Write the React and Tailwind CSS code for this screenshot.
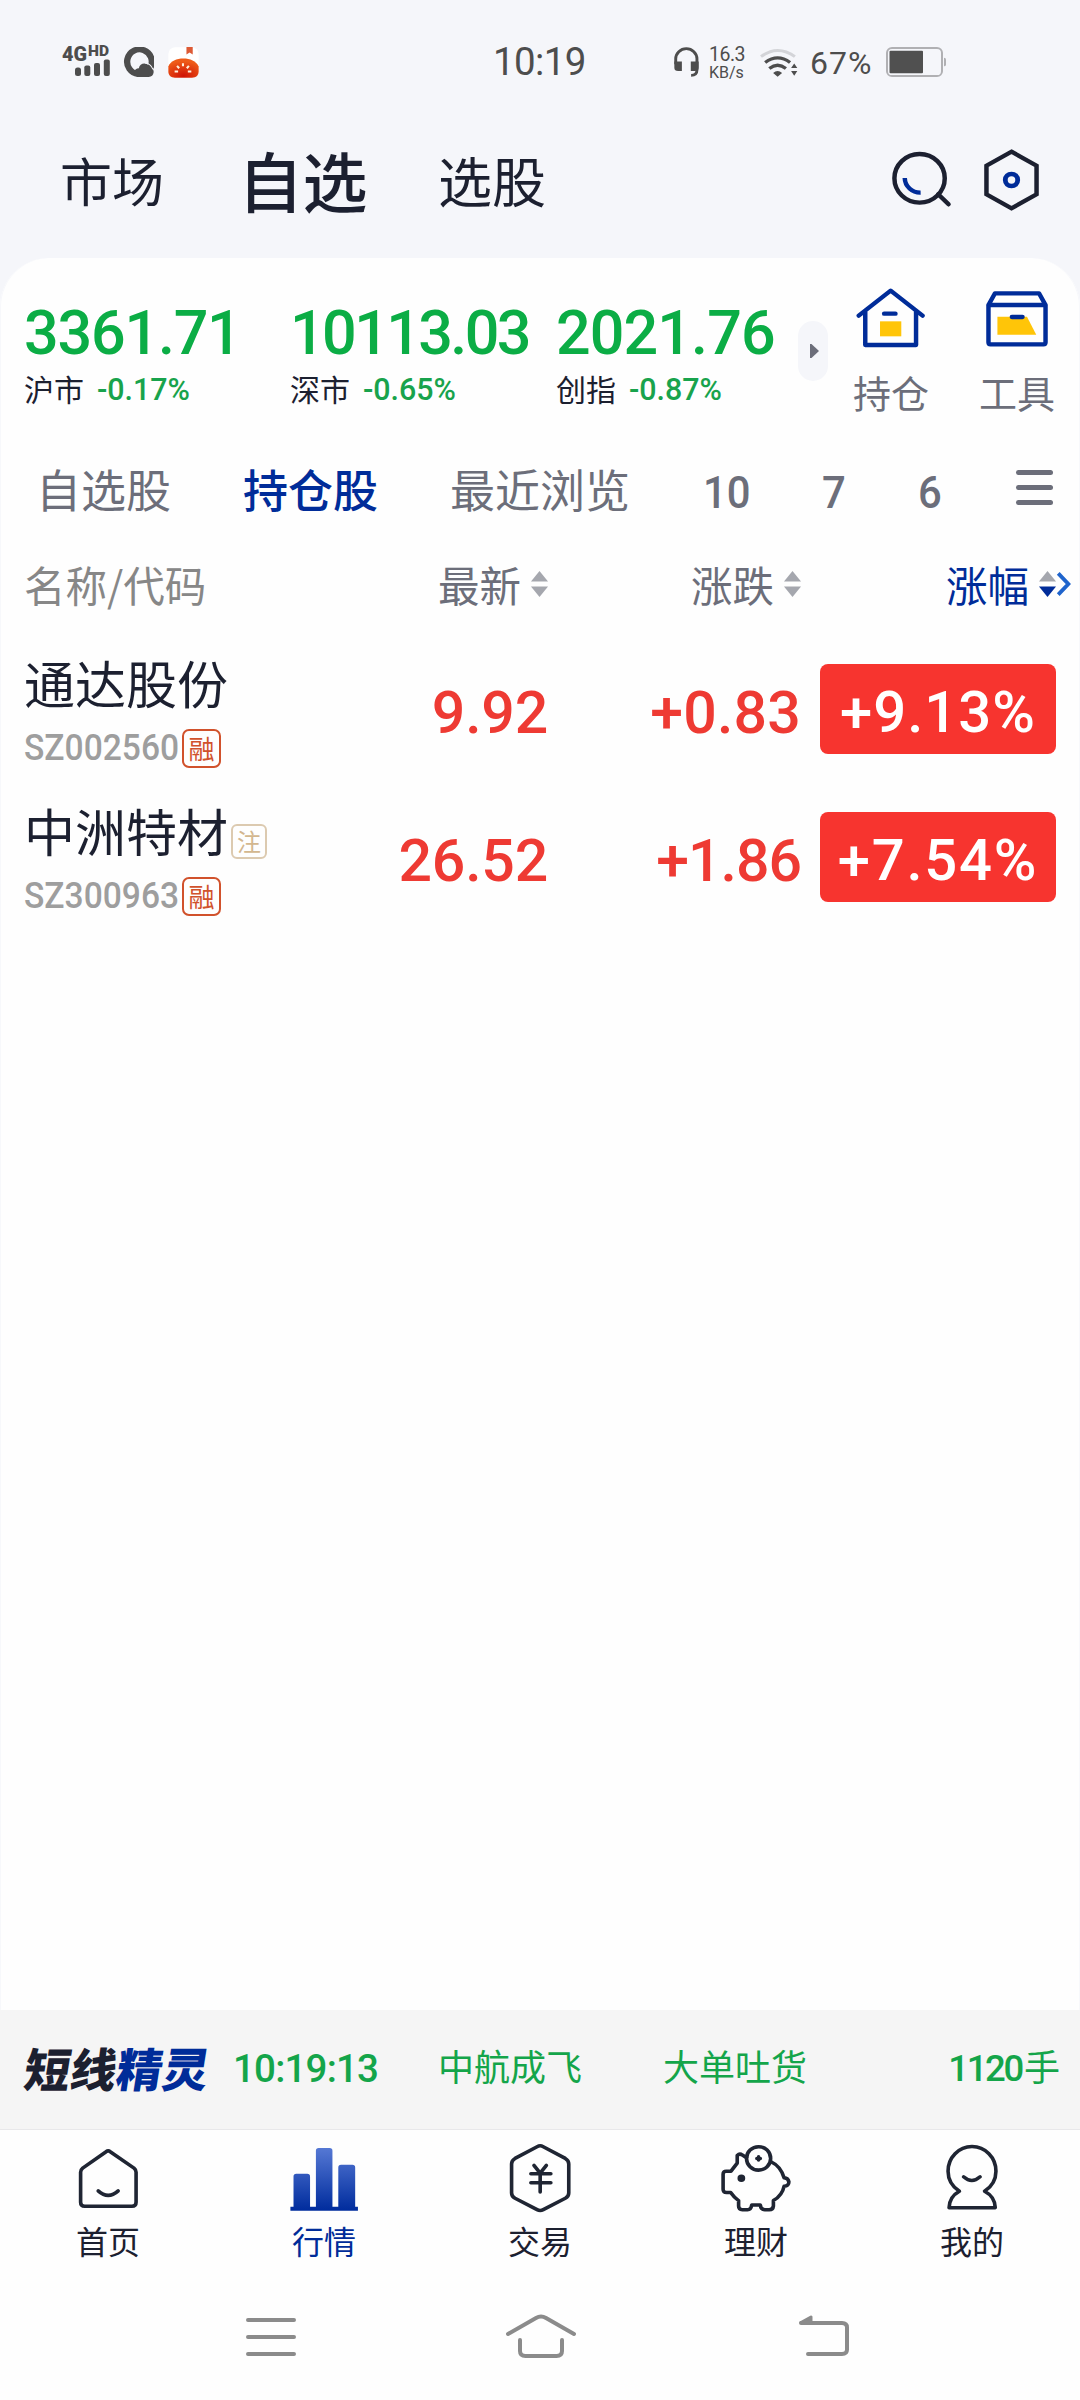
import React from "react";

const CJK = "font-['Noto_Sans_CJK_SC',sans-serif] leading-none whitespace-nowrap";
const NUM = "font-['Roboto','Noto_Sans_CJK_SC',sans-serif] leading-none whitespace-nowrap";

function StatusBar() {
  return (
    <div className="flex h-[116px] shrink-0 items-start text-[#4d4d4d]">
      <svg className="mt-[35px] ml-[60px] h-[46px] w-[55px] overflow-visible" viewBox="-2 -10 55 46" fill="#4d4d4d">
        <text x="0" y="15.5" fontFamily="Roboto, sans-serif" fontWeight="900" fontSize="21" textLength="25" lengthAdjust="spacingAndGlyphs">4G</text>
        <text x="26" y="10.5" fontFamily="Roboto, sans-serif" fontWeight="900" fontSize="14.5" textLength="21" lengthAdjust="spacingAndGlyphs">HD</text>
        <rect x="13" y="22.500" width="6" height="8.500" rx="2.500" />
        <rect x="22.300" y="20.500" width="6" height="10.500" rx="2" />
        <rect x="32" y="18" width="6" height="13" rx="2" />
        <rect x="41.800" y="14.500" width="6" height="16.500" rx="2" />
      </svg>
      <svg className="mt-[47px] ml-[8px] h-[30px] w-[31px]" viewBox="357 81 88 90" preserveAspectRatio="none">
        <path d="M412 162 H400 A35 37 0 1 1 435 142" fill="none" stroke="#4d4d4d" strokeWidth="18" />
        <path d="M398 171 C384 162 388 146 402 145 C404 130 421 126 431 137 C438 141 445 148 444 157 C443 166 438 171 430 171 Z" fill="#4d4d4d" />
        <path d="M420 129 C431 130 438 137 442 148" fill="none" stroke="#f5f6fa" strokeWidth="3" />
      </svg>
      <svg className="mt-[47px] ml-[14px] h-[31px] w-[31px]" viewBox="487 80 89 92" preserveAspectRatio="none">
        <defs>
          <radialGradient id="melon" cx="50%" cy="90%" r="75%">
            <stop offset="0" stopColor="#cf1205" />
            <stop offset="1" stopColor="#ee5b18" />
          </radialGradient>
        </defs>
        <rect x="488" y="81" width="87" height="90" rx="20" fill="#fff" />
        <path d="M488 138 C494 121 512 114 531 114 C550 114 568 121 575 138 V152 C575 164 568 171 556 171 H507 C495 171 488 164 488 152 Z" fill="url(#melon)" />
        <path d="M540 80 H558 V102 L549 96 L540 102 Z" fill="#dd5a35" />
        <path d="M530 128 V137 M513 136 L519 143 M547 136 L541 143 M506 153 H516 M554 153 H544" stroke="#fff0dc" strokeWidth="6" />
      </svg>
      <span className={`${NUM} mt-[43px] ml-[294px] w-[96px] text-[38.500px] tracking-[-0.6px]`}>10:19</span>
      <svg className="mt-[47px] ml-[85px] h-[30px] w-[25px]" viewBox="388 80 73 91" preserveAspectRatio="none">
        <path d="M393 132 V116 A31 31 0 0 1 455 116 V150 Q455 166 438 166" fill="none" stroke="#4d4d4d" strokeWidth="8.5" />
        <path d="M389 124 H411 V153 H400 Q389 153 389 143 Z M437 124 H460 V143 Q460 153 449 153 H437 Z" fill="#4d4d4d" />
      </svg>
      <div className="mt-[45px] ml-[10px] flex w-[51px] flex-col">
        <span className={`${NUM} text-[19.500px] leading-[19px] tracking-[-0.5px]`}>16.3</span>
        <span className={`${NUM} text-[16px] leading-[15px]`}>KB/s</span>
      </div>
      <svg className="mt-[48px] h-[29px] w-[38px]" viewBox="640 84 110 88" preserveAspectRatio="none">
        <path d="M643 110 Q691 73 741 110" fill="none" stroke="#d3d4d8" strokeWidth="9" />
        <path d="M655 128 Q691 100 727 128" fill="none" stroke="#4d4d4d" strokeWidth="10" />
        <path d="M667 146 Q691 127 715 146" fill="none" stroke="#4d4d4d" strokeWidth="10" />
        <path d="M678 160 Q691 148 704 160 L691 171 Z M730 145 L739 131 L748 145 Z M730 154 L739 168 L748 154 Z" fill="#4d4d4d" />
      </svg>
      <span className={`${NUM} mt-[47px] ml-[12px] w-[76px] text-[32px] tracking-[1px]`}>67%</span>
      <svg className="mt-[47px] h-[30px] w-[61px]" viewBox="0 0 61 31" preserveAspectRatio="none">
        <rect x="1" y="1" width="55" height="29" rx="5" fill="none" stroke="#b0b0b3" strokeWidth="2" />
        <rect x="3.500" y="4" width="33.500" height="23" rx="1" fill="#505050" />
        <path d="M58 11 Q60 11 60 13 V18 Q60 20 58 20 Z" fill="#b0b0b3" />
      </svg>
    </div>
  );
}

function TopNav() {
  return (
    <div className="flex h-[142px] shrink-0 items-center pb-[15px] text-[#1c2030]">
      <span className={`${CJK} ml-[60px] w-[178px] text-[52px]`}>市场</span>
      <span className={`${CJK} w-[200px] text-[65px] font-medium tracking-[-0.5px]`}>自选</span>
      <span className={`${CJK} w-[454px] text-[54px]`}>选股</span>
      <svg className="mt-[1px] h-[58px] w-[60px]" viewBox="1020 395 174 174" fill="none" preserveAspectRatio="none">
        <circle cx="1100" cy="477" r="73" stroke="#1c2030" strokeWidth="13" />
        <path d="M1154 525 L1184 555" stroke="#1c2030" strokeWidth="13" strokeLinecap="round" />
        <path d="M1057 476 A45 45 0 0 0 1103 520" stroke="#002c99" strokeWidth="13" />
      </svg>
      <svg className="mt-[1px] ml-[31px] h-[64px] w-[57px]" viewBox="1285 384 165 192" fill="none" preserveAspectRatio="none">
        <path d="M1367.500 395 L1440 437 V523 L1367.500 565 L1295 523 V437 Z" stroke="#1c2030" strokeWidth="13" />
        <circle cx="1367.500" cy="480" r="18" stroke="#002c99" strokeWidth="14" />
      </svg>
    </div>
  );
}

const indices = [
  { value: "3361.71", name: "沪市", pct: "-0.17%", style: "tracking-[-1.2px]" },
  { value: "10113.03", name: "深市", pct: "-0.65%", style: "tracking-[-2.6px]" },
  { value: "2021.76", name: "创指", pct: "-0.87%", style: "tracking-[-0.9px]" },
];

function IndexStrip() {
  return (
    <div className="flex h-[190px] shrink-0 items-start">
      <div className="ml-[24px] grid grid-cols-[266px_266px_242px]">
        {indices.map((i) => (
          <div key={i.name} className="flex flex-col pt-[45px]">
            <span className={`${NUM} text-[61px] font-medium leading-[64px] text-[#0bad45] ${i.style}`}>{i.value}</span>
            <div className="mt-[7px] flex h-[34px] items-center">
              <span className={`${CJK} w-[73px] text-[30px] text-[#1c2030]`}>{i.name}</span>
              <span className={`${NUM} origin-left scale-x-[0.98] pt-[3px] text-[31px] font-medium text-[#18a34c]`}>{i.pct}</span>
            </div>
          </div>
        ))}
      </div>
      <div className="mt-[63px] flex h-[60px] w-[30px] items-center justify-center rounded-full bg-[#f5f6fa]">
        <svg className="ml-[2px] h-[14px] w-[9px]" viewBox="0 0 9 15" preserveAspectRatio="none"><path d="M0 0 H1.500 L9 7.500 L1.500 15 H0 Z" fill="#6c6e7a" /></svg>
      </div>
      <div className="flex w-[126px] flex-col items-center pt-[29px]">
        <svg className="h-[62px] w-[70px]" viewBox="918 110 204 186" fill="none" preserveAspectRatio="none">
          <path d="M926 196 L1019 121 L1112 196 M945 184 V284 H1093 V184" stroke="#002c99" strokeWidth="13" strokeLinecap="round" strokeLinejoin="round" />
          <rect x="988" y="213" width="62" height="45" fill="#ffc508" />
          <path d="M1000 190 H1033" stroke="#002c99" strokeWidth="13" strokeLinecap="round" />
        </svg>
        <span className={`${CJK} mt-[24px] text-[38px] text-[#6c6e7a]`}>持仓</span>
      </div>
      <div className="flex w-[126px] flex-col items-center pt-[29px]">
        <svg className="h-[62px] w-[66px]" viewBox="1289 110 192 186" fill="none" preserveAspectRatio="none">
          <path d="M1302 164 L1321 129 H1449 L1468 164 M1302 164 V276 Q1302 282 1308 282 H1462 Q1468 282 1468 276 V164 Z" stroke="#002c99" strokeWidth="13" strokeLinecap="round" strokeLinejoin="round" />
          <path d="M1328 199 H1414 L1441 253 H1328 Z" fill="#ffc508" />
          <path d="M1370 200 H1401" stroke="#002c99" strokeWidth="13" strokeLinecap="round" />
        </svg>
        <span className={`${CJK} mt-[24px] text-[38px] text-[#6c6e7a]`}>工具</span>
      </div>
    </div>
  );
}

function GroupTabs() {
  const digit = `${NUM} origin-left scale-x-[0.93] pt-[8px] text-[45px] font-medium`;
  return (
    <div className="flex h-[85px] shrink-0 items-center pb-[4px] text-[#6c6e7a]">
      <span className={`${CJK} ml-[36px] w-[207px] text-[45px]`}>自选股</span>
      <span className={`${CJK} w-[207px] text-[45px] font-medium text-[#002c99]`}>持仓股</span>
      <span className={`${CJK} w-[253px] text-[45px]`}>最近浏览</span>
      <span className={`${digit} w-[119px]`}>10</span>
      <span className={`${digit} w-[96px]`}>7</span>
      <span className={`${digit} w-[98px]`}>6</span>
      <div className="mb-[3px] flex w-[37px] flex-col gap-[10px]">
        <div className="h-[5px] rounded-full bg-[#6c6e7a]" />
        <div className="h-[5px] rounded-full bg-[#6c6e7a]" />
        <div className="h-[5px] rounded-full bg-[#6c6e7a]" />
      </div>
    </div>
  );
}

function Sort({ down = "#a5a7ae" }) {
  return (
    <svg className="mb-[2px] ml-[10px] h-[26px] w-[17px]" viewBox="0 0 17 26">
      <path d="M8.500 0 L17 10.500 H0 Z" fill="#a5a7ae" />
      <path d="M8.500 26 L17 15.500 H0 Z" fill={down} />
    </svg>
  );
}

function ColumnHead() {
  return (
    <div className={`${CJK} grid h-[102px] shrink-0 grid-cols-[300px_248px_253px_279px] items-center pt-[2px] text-[41.500px] text-[#6c6e7a]`}>
      <span className="ml-[24px] text-[#878787]">名称/代码</span>
      <div className="flex items-center justify-end"><span>最新</span><Sort /></div>
      <div className="flex items-center justify-end"><span>涨跌</span><Sort /></div>
      <div className="flex items-center justify-end pr-[8px]">
        <span className="text-[#002c99]">涨幅</span>
        <Sort down="#002c99" />
        <svg className="mb-[2px] h-[24px] w-[16px]" viewBox="0 0 16 25"><path d="M2 1.500 L12.500 12.500 L2 23.500" fill="none" stroke="#1f64cc" strokeWidth="4" /></svg>
      </div>
    </div>
  );
}

const stocks = [
  { name: "通达股份", code: "SZ002560", price: "9.92", diff: "+0.83", pct: "+9.13%", track: "tracking-[1px]", diffTrack: "tracking-[0.2px]" },
  { name: "中洲特材", code: "SZ300963", price: "26.52", diff: "+1.86", pct: "+7.54%", track: "tracking-[1.8px]", diffTrack: "tracking-[-1px]", note: true },
];

function StockRow({ s }) {
  return (
    <div className="grid h-[148px] shrink-0 grid-cols-[300px_248px_253px_279px] items-center">
      <div className="flex flex-col pt-[4px] pl-[24px]">
        <div className="flex h-[62px] items-center">
          <span className={`${CJK} text-[51px] text-[#1c2030]`}>{s.name}</span>
          {s.note && (
            <span className={`${CJK} mt-[22px] ml-[3px] flex h-[35px] w-[36px] items-center justify-center rounded-[6px] border-2 border-[#dccab0] pb-[2px] text-[24px] text-[#d3b78f]`}>注</span>
          )}
        </div>
        <div className="mt-[13px] flex h-[44px] items-center">
          <span className={`${NUM} w-[158px]`}>
            <span className="inline-block origin-left scale-x-[0.92] text-[36.500px] font-medium text-[#9e9e9e]">{s.code}</span>
          </span>
          <span className={`${CJK} flex h-[39px] w-[39px] items-center justify-center rounded-[7px] border-2 border-[#d1522c] pb-[1px] text-[26px] text-[#d1522c]`}>融</span>
        </div>
      </div>
      <span className={`${NUM} pt-[7px] text-right text-[59px] font-medium tracking-[-0.2px] text-[#ee3a33]`}>{s.price}</span>
      <span className={`${NUM} pt-[7px] text-right text-[59px] font-medium text-[#ee3a33] ${s.diffTrack}`}>{s.diff}</span>
      <div className={`${NUM} ml-[19px] flex h-[90px] w-[236px] items-center justify-center rounded-[8px] bg-[#f7342f] pt-[6px] text-[58px] font-medium text-white ${s.track}`}>{s.pct}</div>
    </div>
  );
}

function Ticker() {
  return (
    <div className="flex h-[119px] shrink-0 items-center bg-[#f5f5f5] text-[#14a54a]">
      <span className={`${CJK} ml-[25px] w-[208px] -skew-x-[9deg] pb-[5px] text-[46px] font-black text-[#1c2030]`}>
        短线<span className="text-[#002c99]">精灵</span>
      </span>
      <span className={`${NUM} w-[205px] pb-[1px] text-[38.500px] font-medium tracking-[-0.8px]`}>10:19:13</span>
      <span className={`${CJK} w-[225px] pb-[9px] text-[36px]`}>中航成飞</span>
      <span className={`${CJK} w-[227px] pb-[9px] text-[36px]`}>大单吐货</span>
      <div className="flex flex-1 items-center justify-end pr-[20px]">
        <span className={`${NUM} pb-[1px] text-[36.500px] font-medium tracking-[-2.3px]`}>1120</span>
        <span className={`${CJK} ml-[2px] pb-[9px] text-[36px]`}>手</span>
      </div>
    </div>
  );
}

const iconClass = "h-[70px] w-[72px]";
const ink = { preserveAspectRatio: "none", fill: "none", stroke: "#1f2533", strokeWidth: 10.5, strokeLinecap: "round", strokeLinejoin: "round" };

const tabs = [
  {
    label: "首页",
    icon: (
      <svg className={iconClass} viewBox="211 429 209 209" {...ink}>
        <path d="M310 455 Q316 450 322 455 L391 504 Q397 509 397 516 V606 Q397 618 385 618 H248 Q236 618 236 606 V516 Q236 509 242 504 Z" />
        <path d="M287 572 Q316 599 345 572" />
      </svg>
    ),
  },
  {
    label: "行情",
    active: true,
    icon: (
      <svg className={iconClass} viewBox="838 429 209 209" preserveAspectRatio="none">
        <defs>
          <linearGradient id="bars" gradientUnits="userSpaceOnUse" x1="0" y1="444" x2="0" y2="630">
            <stop offset="0" stopColor="#5578d4" />
            <stop offset="1" stopColor="#002c9d" />
          </linearGradient>
        </defs>
        <path d="M845 619 H854 V529 Q854 521 862 521 H894 Q902 521 902 529 V619 H919 V452 Q919 444 927 444 H959 Q967 444 967 452 V619 H984 V502 Q984 494 992 494 H1025 Q1033 494 1033 502 V619 H1041 V631 H845 Z" fill="url(#bars)" />
      </svg>
    ),
  },
  {
    label: "交易",
    icon: (
      <svg className={iconClass} viewBox="-105 429 209 209" {...ink}>
        <path d="M-9 440 Q0 435 9 440 L73 475 Q83 481 83 492 V578 Q83 588 73 594 L9 628 Q0 633 -9 628 L-73 594 Q-83 588 -83 578 V492 Q-83 481 -73 475 Z" />
        <path d="M-18 496 L0 519 L18 496 M-27 521 H31 M-27 548 H31 M0 519 V575" />
      </svg>
    ),
  },
  {
    label: "理财",
    icon: (
      <svg className={iconClass} viewBox="523 429 209 209" {...ink}>
        <circle cx="635" cy="475" r="35" />
        <path d="M600 473 L588 465 Q580 459 573 466 V489 L555 513 H541 Q532 513 532 522 V567 Q532 577 542 577 H554 Q564 592 577 601 V617 Q577 628 588 628 H603 Q613 628 615 614 H640 Q641 628 653 628 H666 Q677 628 678 617 V601 Q704 585 709 558 Q723 558 723 545 Q721 534 709 533 Q699 498 671 485" />
        <circle cx="585" cy="534" r="6" fill="#1f2533" />
        <path d="M635 470 V480 M630 475 H640" />
      </svg>
    ),
  },
  {
    label: "我的",
    icon: (
      <svg className={iconClass} viewBox="1147 429 209 209" {...ink}>
        <path d="M1215 573 C1193 558 1182 537 1182 513 A69 73 0 0 1 1321 513 C1321 537 1310 558 1288 573 Q1318 589 1319 622 H1185 Q1186 589 1215 573 Z" />
        <path d="M1227 530 Q1251 552 1275 530" />
      </svg>
    ),
  },
];

function BottomNav() {
  return (
    <div className="grid h-[150px] shrink-0 grid-cols-5 border-t border-[#e8e8ea] bg-[#fefefe]">
      {tabs.map((t) => (
        <div key={t.label} className="flex flex-col items-center pt-[13px]">
          {t.icon}
          <span className={`${CJK} mt-[11px] text-[32px] ${t.active ? "text-[#002c99]" : "text-[#1c2030]"}`}>{t.label}</span>
        </div>
      ))}
    </div>
  );
}

function SystemNav() {
  const line = { fill: "none", stroke: "#8b8b8b", strokeWidth: 4, strokeLinecap: "round", strokeLinejoin: "round" };
  return (
    <div className="flex flex-1 items-start bg-[#fefefe] pt-[34px]">
      <svg className="ml-[246px] h-[48px] w-[50px]" viewBox="0 0 50 48" {...line}>
        <path d="M2 7 H48 M2 24 H48 M2 41 H48" />
      </svg>
      <svg className="ml-[209px] h-[48px] w-[72px]" viewBox="0 0 72 48" {...line}>
        <path d="M3 21 L31 5 Q36 2 41 5 L69 21 M15 27 V38 Q15 43 20.500 43 H51.500 Q57 43 57 38 V27" />
      </svg>
      <svg className="ml-[221px] h-[48px] w-[52px]" viewBox="0 0 52 48" {...line}>
        <path d="M10 41 H44 Q49 41 49 36.500 V14.500 Q49 10 44 10 H3" />
        <path d="M3 9.500 L13 4 V9.500 Z" strokeWidth="3" fill="#8b8b8b" />
      </svg>
    </div>
  );
}

export default function App() {
  return (
    <div className="flex h-[2400px] w-[1080px] flex-col overflow-hidden bg-[#f5f6fa]">
      <StatusBar />
      <TopNav />
      <div className="flex h-[1752px] shrink-0 flex-col overflow-hidden rounded-t-[49px] bg-[#fefefe] shadow-[inset_1px_0_0_#f7f8fb,inset_-1px_0_0_#f7f8fb]">
        <IndexStrip />
        <GroupTabs />
        <ColumnHead />
        {stocks.map((s) => (
          <StockRow key={s.code} s={s} />
        ))}
      </div>
      <Ticker />
      <BottomNav />
      <SystemNav />
    </div>
  );
}
